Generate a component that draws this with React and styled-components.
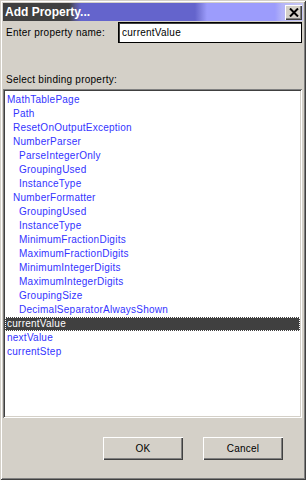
import styled, { createGlobalStyle } from "styled-components";

const GlobalStyle = createGlobalStyle`
  html, body {
    margin: 0;
    padding: 0;
    background: #d4d0c8;
  }
  * {
    box-sizing: border-box;
  }
`;

const items = [
  { label: "MathTablePage", level: 0 },
  { label: "Path", level: 1 },
  { label: "ResetOnOutputException", level: 1 },
  { label: "NumberParser", level: 1 },
  { label: "ParseIntegerOnly", level: 2 },
  { label: "GroupingUsed", level: 2 },
  { label: "InstanceType", level: 2 },
  { label: "NumberFormatter", level: 1 },
  { label: "GroupingUsed", level: 2 },
  { label: "InstanceType", level: 2 },
  { label: "MinimumFractionDigits", level: 2 },
  { label: "MaximumFractionDigits", level: 2 },
  { label: "MinimumIntegerDigits", level: 2 },
  { label: "MaximumIntegerDigits", level: 2 },
  { label: "GroupingSize", level: 2 },
  { label: "DecimalSeparatorAlwaysShown", level: 2 },
  { label: "currentValue", level: 0, selected: true },
  { label: "nextValue", level: 0 },
  { label: "currentStep", level: 0 },
];

function App() {
  return (
    <>
      <GlobalStyle />
      <Window>
        <TitleBar>
          <Title>Add Property...</Title>
          <CloseButton>
            <svg width="10" height="9" viewBox="0 0 10 9">
              <path d="M1 0.5 L9 8.5 M9 0.5 L1 8.5" stroke="#000" strokeWidth="2" />
            </svg>
          </CloseButton>
        </TitleBar>
        <Body>
          <NameRow>
            <Label>Enter property name:</Label>
            <NameInput>currentValue</NameInput>
          </NameRow>
          <SectionLabel>Select binding property:</SectionLabel>
          <List>
            {items.map((item, i) => (
              <Row key={i} $level={item.level} $selected={item.selected}>
                {item.label}
              </Row>
            ))}
          </List>
          <Buttons>
            <Button>OK</Button>
            <Button>Cancel</Button>
          </Buttons>
        </Body>
      </Window>
    </>
  );
}

export default App;

const Window = styled.div`
  width: 306px;
  height: 480px;
  display: flex;
  flex-direction: column;
  padding: 3px 3px 3px 3px;
  background: #d4d0c8;
  box-shadow: inset 1px 1px 0 #d4d0c8, inset -1px -1px 0 #404040,
    inset 2px 2px 0 #ffffff, inset -2px -2px 0 #808080;
  font-family: "Liberation Sans", Arial, sans-serif;
`;

const TitleBar = styled.div`
  height: 18px;
  display: flex;
  align-items: center;
  justify-content: space-between;
  padding: 0 1px 0 2px;
  background: linear-gradient(
    to right,
    #404040 0,
    #404040 66px,
    #585890 72px,
    #6464cc 78px,
    #6464cc 192px,
    #8080e0 198px,
    #9c9cfc 204px,
    #9c9cfc 272px,
    #b4b4f8 279px,
    #c8c8f4 300px
  );
`;

const Title = styled.div`
  color: #ffffff;
  font-weight: bold;
  font-size: 12px;
`;

const CloseButton = styled.div`
  width: 17px;
  height: 15px;
  display: flex;
  align-items: center;
  justify-content: center;
  background: #d4d0c8;
  box-shadow: inset 1px 1px 0 #ffffff, inset -1px -1px 0 #404040,
    inset -2px -2px 0 #808080;
`;

const Body = styled.div`
  flex: 1;
  display: flex;
  flex-direction: column;
  font-size: 10px;
  letter-spacing: 0.25px;
  color: #000;
`;

const NameRow = styled.div`
  display: flex;
  align-items: center;
  justify-content: space-between;
  height: 21px;
  margin-top: 1px;
  padding: 0 1px 0 3px;
`;

const Label = styled.span``;

const NameInput = styled.div`
  width: 184px;
  height: 21px;
  display: flex;
  align-items: center;
  padding: 0 3px;
  background: #fff;
  border: 1px solid #000;
  box-shadow: inset 1px 1px 0 #404040;
`;

const SectionLabel = styled.div`
  margin-top: 31px;
  height: 15px;
  padding-left: 3px;
`;

const List = styled.div`
  height: 329px;
  width: 299px;
  background: #fff;
  padding: 4px 2px 2px 2px;
  box-shadow: inset 1px 1px 0 #808080, inset -1px -1px 0 #ffffff,
    inset 2px 2px 0 #404040, inset -2px -2px 0 #d4d0c8;
`;

const Row = styled.div`
  height: 14px;
  line-height: 14px;
  padding-left: ${(p) => 2 + p.$level * 6}px;
  color: ${(p) => (p.$selected ? "#ffffff" : "#3333ff")};
  background: ${(p) => (p.$selected ? "#404040" : "transparent")};
  outline: ${(p) => (p.$selected ? "1px dotted #ffffff" : "none")};
  outline-offset: -1px;
  white-space: nowrap;
  overflow: hidden;
`;

const Buttons = styled.div`
  display: flex;
  justify-content: flex-end;
  gap: 20px;
  padding: 19px 20px 0 0;
`;

const Button = styled.div`
  width: 80px;
  height: 23px;
  display: flex;
  align-items: center;
  justify-content: center;
  background: #d4d0c8;
  box-shadow: inset 1px 1px 0 #ffffff, inset -1px -1px 0 #404040,
    inset -2px -2px 0 #808080;
`;
